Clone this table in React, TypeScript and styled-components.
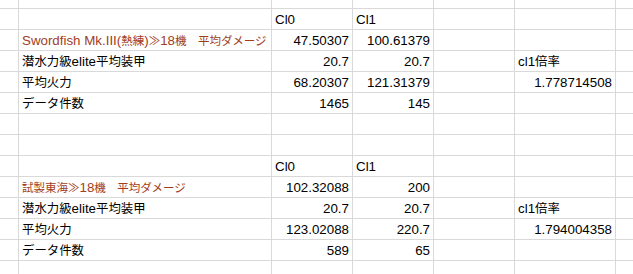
import React from "react";
import styled, { createGlobalStyle } from "styled-components";

const Global = createGlobalStyle`
  html, body { margin: 0; padding: 0; background: #ffffff; }
  body { overflow: hidden; }
`;

const Sheet = styled.div`
  display: grid;
  grid-template-columns: 18px 252px 80px 80px 80px 100px 17px;
  grid-template-rows: 8px repeat(12, 20px) 13px;
  gap: 1px;
  width: 633px;
  height: 274px;
  background: #d9d9d9;
  font-family: "Liberation Sans", Arial, "Noto Sans CJK JP", sans-serif;
  font-size: 13.33px;
  color: #000000;
`;

type Align = "left" | "right";
type Tone = "plain" | "title";

const Cell = styled.div<{ $align: Align; $tone: Tone }>`
  background: #ffffff;
  display: flex;
  align-items: flex-end;
  justify-content: ${(p) => (p.$align === "right" ? "flex-end" : "flex-start")};
  padding: 0 3px 1px 3px;
  line-height: 16px;
  white-space: nowrap;
  overflow: hidden;
  color: ${(p) => (p.$tone === "title" ? "#a13d1d" : "#000000")};
`;

const Line = styled.span`
  display: inline-block;
  white-space: nowrap;
`;

const Jp = styled.span<{ $tone: Tone }>`
  font-family: "Noto Sans CJK JP", sans-serif;
  font-size: ${(p) => (p.$tone === "title" ? "11.5px" : "12.4px")};
`;

type CellData = { text?: string; align?: Align; tone?: Tone };
type RowData = CellData[];

const empty = (): RowData => Array.from({ length: 7 }, () => ({}));

const row = (b?: CellData, c?: CellData, d?: CellData, f?: CellData): RowData => [
  {},
  b || {},
  c || {},
  d || {},
  {},
  f || {},
  {},
];

const L = (text: string, tone: Tone = "plain"): CellData => ({ text, align: "left", tone });
const R = (text: string): CellData => ({ text, align: "right" });

const rows: RowData[] = [
  empty(),
  row(undefined, L("Cl0"), L("Cl1")),
  row(L("Swordfish Mk.III(熱練)≫18機　平均ダメージ", "title"), R("47.50307"), R("100.61379")),
  row(L("潜水力級elite平均装甲"), R("20.7"), R("20.7"), L("cl1倍率")),
  row(L("平均火力"), R("68.20307"), R("121.31379"), R("1.778714508")),
  row(L("データ件数"), R("1465"), R("145")),
  empty(),
  empty(),
  row(undefined, L("Cl0"), L("Cl1")),
  row(L("試製東海≫18機　平均ダメージ", "title"), R("102.32088"), R("200")),
  row(L("潜水力級elite平均装甲"), R("20.7"), R("20.7"), L("cl1倍率")),
  row(L("平均火力"), R("123.02088"), R("220.7"), R("1.794004358")),
  row(L("データ件数"), R("589"), R("65")),
  empty(),
];

const CJK = /([\u3000-\u30ff\u4e00-\u9fff\uff00-\uffef\u226b]+)/;

function Text({ text, tone }: { text: string; tone: Tone }) {
  const parts = text.split(CJK).filter((s) => s.length > 0);
  return (
    <Line>
      {parts.map((s, i) =>
        CJK.test(s) ? (
          <Jp key={i} $tone={tone}>
            {s}
          </Jp>
        ) : (
          <React.Fragment key={i}>{s}</React.Fragment>
        )
      )}
    </Line>
  );
}

export default function App() {
  return (
    <>
      <Global />
      <Sheet>
        {rows.map((r, ri) =>
          r.map((c, ci) => (
            <Cell key={`${ri}-${ci}`} $align={c.align || "left"} $tone={c.tone || "plain"}>
              {c.text ? <Text text={c.text} tone={c.tone || "plain"} /> : null}
            </Cell>
          ))
        )}
      </Sheet>
    </>
  );
}
